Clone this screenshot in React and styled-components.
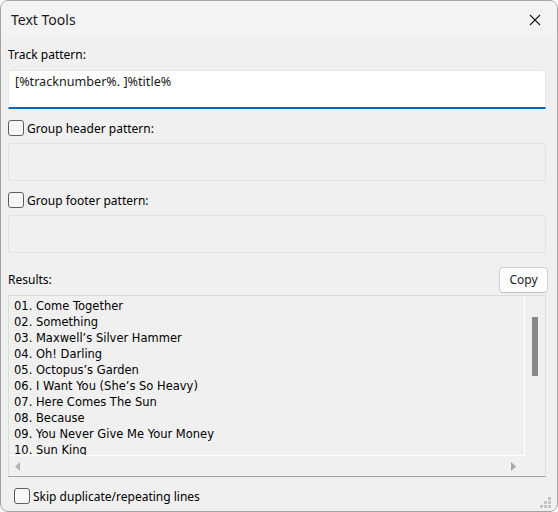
import React from "react";
import styled, { createGlobalStyle } from "styled-components";

const GlobalStyle = createGlobalStyle`
  html, body { margin: 0; padding: 0; background: #ffffff; }
  * { box-sizing: border-box; }
`;

const Window = styled.div`
  width: 558px;
  height: 512px;
  border: 1px solid #a3a3a3;
  border-radius: 8px;
  background: #f0f0f0;
  overflow: hidden;
  display: flex;
  flex-direction: column;
  font-family: "Noto Sans", "Segoe UI", sans-serif;
  font-size: 12px;
  color: #000;
  position: relative;
`;

const TitleBar = styled.div`
  height: 37px;
  flex: none;
  display: flex;
  align-items: center;
  justify-content: space-between;
  padding: 0 14px 0 10px;
  background: #f3f3f3;
`;

const Title = styled.span`
  font-size: 14px;
  color: #1a1a1a;
`;

const CloseButton = styled.button`
  border: 0;
  background: transparent;
  padding: 0;
  width: 16px;
  height: 16px;
  display: flex;
  align-items: center;
  justify-content: center;
`;

const Body = styled.div`
  flex: 1;
  display: flex;
  flex-direction: column;
  padding: 0 11px 0 7px;
`;

const Label = styled.div`
  height: 18px;
  line-height: 18px;
  margin-top: ${(p) => p.$mt || 0}px;
`;

const TextInput = styled.div`
  margin-top: 6px;
  height: 39px;
  background: #ffffff;
  border: 1px solid #e6e6e6;
  border-bottom: 2px solid #0067c0;
  border-radius: 3px 3px 0 0;
  padding: 2px 6px;
  font-size: 12.6px;
  line-height: 18px;
  color: #1a1a1a;
`;

const DisabledBox = styled.div`
  margin-top: 6px;
  height: 38px;
  border: 1px solid #e2e2e2;
  background: #f0f0f0;
  border-radius: 2px;
`;

const CheckRow = styled.label`
  display: flex;
  align-items: center;
  gap: 3px;
  height: 18px;
  margin-top: ${(p) => p.$mt || 0}px;
  padding-left: ${(p) => p.$pl || 0}px;
`;

const Box = styled.span`
  width: 16px;
  height: 16px;
  flex: none;
  border: 1px solid #5c5c5c;
  border-radius: 3px;
  background: #f7f7f7;
`;

const ResultsHeader = styled.div`
  margin-top: 13px;
  display: flex;
  align-items: center;
  justify-content: space-between;
  height: 27px;
  margin-right: -2px;
`;

const CopyButton = styled.button`
  width: 49px;
  height: 26px;
  background: #fdfdfd;
  border: 1px solid #d0d0d0;
  border-bottom-color: #c2c2c2;
  border-radius: 4px;
  font-family: inherit;
  font-size: 12px;
  color: #1a1a1a;
  padding: 0;
`;

const Results = styled.div`
  margin-top: 2px;
  height: 182px;
  border: 1px solid #dcdcdc;
  border-bottom-color: #a0a0a0;
  display: grid;
  grid-template-columns: 1fr 20px;
  grid-template-rows: 1fr 20px;
`;

const ListArea = styled.div`
  border-right: 1px solid #ffffff;
  border-bottom: 1px solid #ffffff;
  padding: 2px 5px 0;
  overflow: hidden;
  font-family: "DejaVu Sans", Tahoma, sans-serif;
  font-size: 11.5px;
  line-height: 16px;
  color: #000;
`;

const Line = styled.div`
  white-space: nowrap;
`;

const VScroll = styled.div`
  display: flex;
  justify-content: center;
  padding-top: 21px;
`;

const Thumb = styled.div`
  width: 6px;
  height: 59px;
  background: #888888;
`;

const HScroll = styled.div`
  display: flex;
  align-items: center;
  justify-content: space-between;
  padding: 0 9px 0 6px;
`;

const Corner = styled.div``;

const Grip = styled.svg`
  position: absolute;
  right: 5px;
  bottom: 2px;
`;

const tracks = [
  "01. Come Together",
  "02. Something",
  "03. Maxwell\u2019s Silver Hammer",
  "04. Oh! Darling",
  "05. Octopus\u2019s Garden",
  "06. I Want You (She\u2019s So Heavy)",
  "07. Here Comes The Sun",
  "08. Because",
  "09. You Never Give Me Your Money",
  "10. Sun King",
];

export default function App() {
  return (
    <>
      <GlobalStyle />
      <Window>
        <TitleBar>
          <Title>Text Tools</Title>
          <CloseButton aria-label="Close">
            <svg width="12" height="12" viewBox="0 0 12 12">
              <path d="M1 1 L11 11 M11 1 L1 11" stroke="#1a1a1a" strokeWidth="1.1" />
            </svg>
          </CloseButton>
        </TitleBar>
        <Body>
          <Label $mt={8}>Track pattern:</Label>
          <TextInput>[%tracknumber%. ]%title%</TextInput>
          <CheckRow $mt={10}>
            <Box />
            Group header pattern:
          </CheckRow>
          <DisabledBox />
          <CheckRow $mt={10}>
            <Box />
            Group footer pattern:
          </CheckRow>
          <DisabledBox />
          <ResultsHeader>
            <Label>Results:</Label>
            <CopyButton>Copy</CopyButton>
          </ResultsHeader>
          <Results>
            <ListArea>
              {tracks.map((t) => (
                <Line key={t}>{t}</Line>
              ))}
            </ListArea>
            <VScroll>
              <Thumb />
            </VScroll>
            <HScroll>
              <svg width="6" height="9" viewBox="0 0 6 9">
                <path d="M5 0 L0 4.5 L5 9 Z" fill="#b4b4b4" />
              </svg>
              <svg width="6" height="9" viewBox="0 0 6 9">
                <path d="M1 0 L6 4.5 L1 9 Z" fill="#a8a8a8" />
              </svg>
            </HScroll>
            <Corner />
          </Results>
          <CheckRow $mt={10} $pl={6}>
            <Box />
            Skip duplicate/repeating lines
          </CheckRow>
        </Body>
        <Grip width="12" height="12" viewBox="0 0 12 12">
          {[
            [8, 0],
            [4, 4],
            [8, 4],
            [0, 8],
            [4, 8],
            [8, 8],
          ].map(([x, y]) => (
            <rect key={`${x}-${y}`} x={x} y={y} width="3" height="3" fill="#c4c4c4" />
          ))}
        </Grip>
      </Window>
    </>
  );
}
